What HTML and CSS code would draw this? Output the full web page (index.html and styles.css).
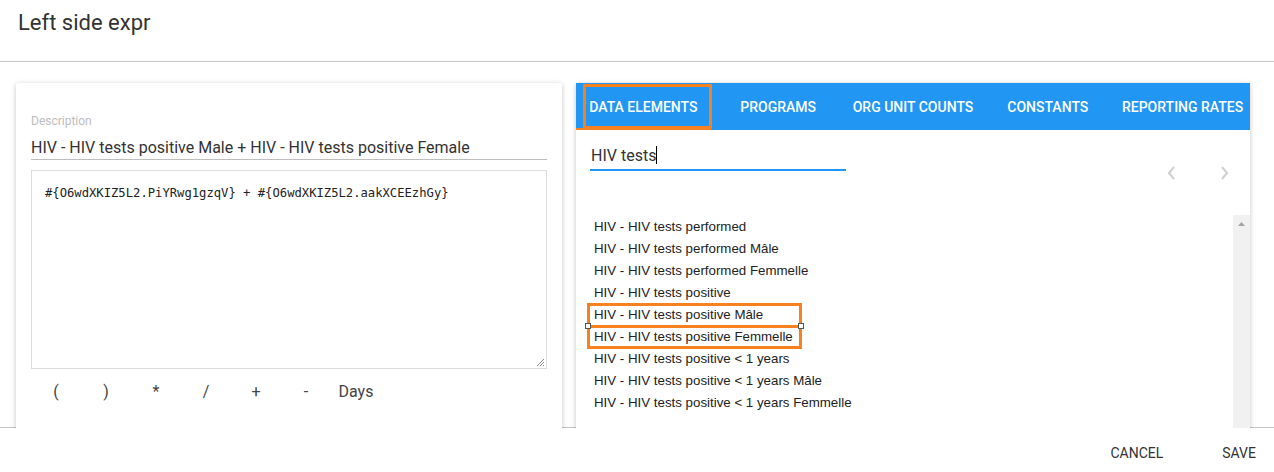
FILE: index.html
```html
<!DOCTYPE html>
<html>
<head>
<meta charset="utf-8">
<link rel="stylesheet" href="styles.css">
</head>
<body>
<div class="dialog">
  <div class="title">Left side expr</div>
  <div class="body">
    <div class="card left">
      <div class="label">Description</div>
      <div class="value">HIV - HIV tests positive Male + HIV - HIV tests positive Female</div>
      <div class="code">
        <span>#{O6wdXKIZ5L2.PiYRwg1gzqV} + #{O6wdXKIZ5L2.aakXCEEzhGy}</span>
        <svg class="grip" width="10" height="10" viewBox="0 0 10 10"><path d="M9 2 L2 9 M9 5 L5 9 M9 8 L8 9" stroke="#888" stroke-width="1" fill="none"/></svg>
      </div>
      <div class="ops">
        <span class="op">(</span><span class="op">)</span><span class="op">*</span><span class="op">/</span><span class="op">+</span><span class="op">-</span><span class="op">Days</span>
      </div>
    </div>
    <div class="card right">
      <div class="tabs">
        <div class="tab active">Data elements</div>
        <div class="tab">Programs</div>
        <div class="tab">Org unit counts</div>
        <div class="tab">Constants</div>
        <div class="tab">Reporting rates</div>
        <div class="mark tabmark"></div>
      </div>
      <div class="searchrow">
        <div class="search">HIV tests<span class="caret"></span></div>
        <div class="pager">
          <svg width="10" height="14" viewBox="0 0 10 14"><polyline points="7,1 2,7 7,13" fill="none" stroke="#cfcfcf" stroke-width="2"/></svg>
          <svg width="10" height="14" viewBox="0 0 10 14"><polyline points="3,1 8,7 3,13" fill="none" stroke="#cfcfcf" stroke-width="2"/></svg>
        </div>
      </div>
      <div class="listwrap">
        <div class="list">
          <div class="item">HIV - HIV tests performed</div>
          <div class="item">HIV - HIV tests performed Mâle</div>
          <div class="item">HIV - HIV tests performed Femmelle</div>
          <div class="item">HIV - HIV tests positive</div>
          <div class="item">HIV - HIV tests positive Mâle</div>
          <div class="item">HIV - HIV tests positive Femmelle</div>
          <div class="item">HIV - HIV tests positive &lt; 1 years</div>
          <div class="item">HIV - HIV tests positive &lt; 1 years Mâle</div>
          <div class="item">HIV - HIV tests positive &lt; 1 years Femmelle</div>
        </div>
        <div class="scrollbar"><svg width="17" height="17" viewBox="0 0 17 17"><polygon points="5,11 12,11 8.5,7" fill="#a3a3a3"/></svg></div>
        <div class="mark box1"></div>
        <div class="mark box2"></div>
        <div class="handle h1"></div>
        <div class="handle h2"></div>
      </div>
    </div>
  </div>
  <div class="footer">
    <span class="btn">Cancel</span>
    <span class="btn">Save</span>
  </div>
</div>
</body>
</html>
```
FILE: styles.css
```css
* { box-sizing: border-box; }
html, body { margin: 0; padding: 0; background: #fff; }
body { font-family: Roboto, "Noto Sans", sans-serif; color: #333; }
.dialog { width: 1274px; height: 472px; display: flex; flex-direction: column; overflow: hidden; }
.title { height: 62px; flex: none; border-bottom: 1px solid #c4c4c4; padding: 11px 0 0 18px; font-size: 22px; line-height: 24px; color: #333; }
.body { flex: none; height: 366px; overflow: hidden; display: flex; gap: 14px; padding: 21px 24px 0 16px; align-items: flex-start; box-shadow: inset 0 -1px 0 #c4c4c4; }
.card { background: #fff; border-radius: 2px; box-shadow: 0 1px 6px rgba(0,0,0,0.12), 0 1px 4px rgba(0,0,0,0.12); height: 420px; }
.left { width: 546px; padding: 29px 15px 0 15px; }
.label { font-size: 12px; line-height: 18px; color: #bdbdbd; }
.value { height: 30px; font-size: 16px; line-height: 20px; padding-top: 8px; border-bottom: 1px solid #bdbdbd; color: #333; }
.code { position: relative; margin-top: 10px; height: 199px; border: 1px solid #dcdcdc; padding: 14px 13px; font-family: "DejaVu Sans Mono", "Liberation Mono", monospace; font-size: 12.2px; line-height: 16px; color: #222; }
.grip { position: absolute; right: 1px; bottom: 1px; }
.ops { display: flex; height: 36px; margin-top: 4px; align-items: center; }
.op { width: 50px; text-align: center; font-size: 16px; color: #444; }
.right { width: 674px; position: relative; }
.tabs { position: relative; display: flex; height: 47px; background: #2196f3; }
.tab { flex: 1; display: flex; align-items: center; justify-content: center; color: #fff; font-size: 14px; font-weight: 500; text-transform: uppercase; }
.tab.active { box-shadow: inset 0 -2px 0 #f68121; }
.mark { position: absolute; border: 3px solid #f7801f; }
.tabmark { left: 7px; top: 1px; width: 129px; height: 45px; }
.searchrow { display: flex; justify-content: space-between; align-items: flex-end; padding: 0 14px; height: 55px; }
.search { width: 256px; height: 32px; border-bottom: 2px solid #2196f3; font-size: 16px; line-height: 20px; padding: 7px 0 0 1px; color: #333; margin-bottom: 14px; }
.caret { display: inline-block; width: 1px; height: 18px; background: #000; vertical-align: -3px; }
.pager { display: flex; gap: 42px; padding-right: 7px; margin-bottom: 5px; }
.listwrap { position: relative; margin: 30px 0 0 14px; height: 300px; }
.list { padding-top: 1px; font-family: "Liberation Sans", Arial, sans-serif; font-size: 13.3px; color: #222; }
.item { height: 22px; line-height: 22px; padding-left: 4px; white-space: nowrap; }
.scrollbar { position: absolute; right: 0; top: 0; width: 17px; height: 300px; background: #f1f1f1; }
.box1 { left: -3px; top: 88px; width: 215px; height: 25px; }
.box2 { left: -3px; top: 110px; width: 215px; height: 24px; }
.handle { position: absolute; width: 6px; height: 6px; background: #fff; border: 1px solid #555; top: 108px; }
.h1 { left: -5px; }
.h2 { left: 208px; }
.footer { flex: none; height: 44px; display: flex; justify-content: flex-end; align-items: center; padding: 6px 2px 0 0; gap: 27px; }
.btn { padding: 0 16px; font-size: 14px; text-transform: uppercase; color: #333; line-height: 36px; }
```
